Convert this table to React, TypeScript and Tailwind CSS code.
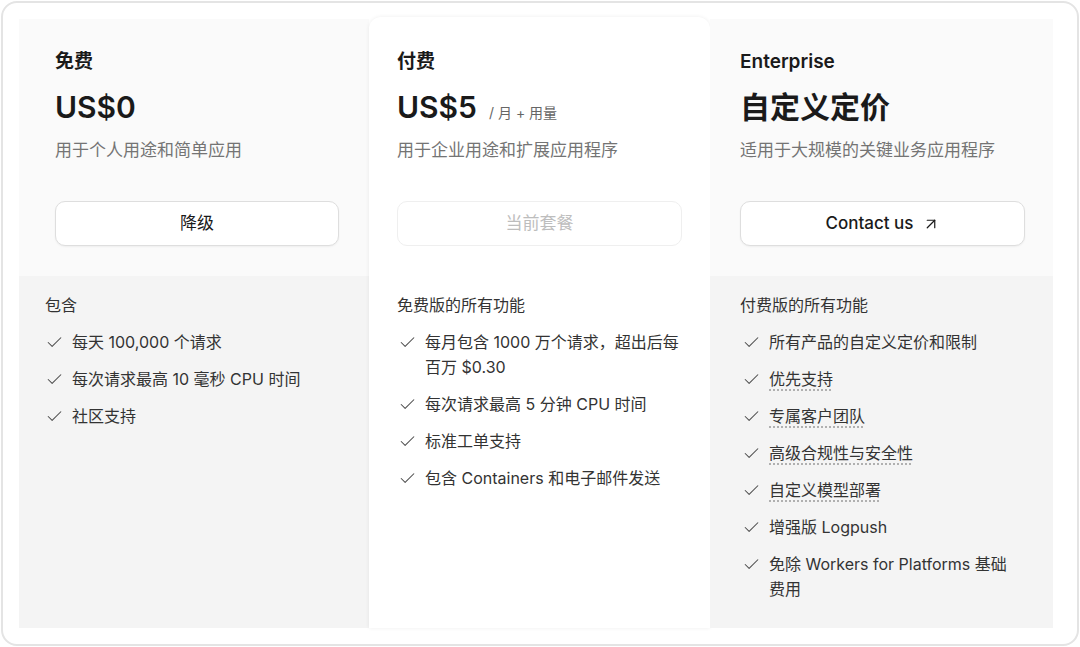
import { Check, ArrowUpRight } from 'lucide-react'

const font = { fontFamily: "Inter, 'Noto Sans CJK SC', 'Noto Sans', sans-serif" }

function Item({ children, dotted }: { children: React.ReactNode; dotted?: boolean }) {
  return (
    <li className="flex items-start gap-[8px] text-[16px] leading-[25px] text-[#333]">
      <Check className="mt-[3px] h-[19px] w-[19px] shrink-0 text-[#4a4a4a]" strokeWidth={1.3} />
      <span
        className={
          dotted
            ? 'underline decoration-dotted decoration-[#999] underline-offset-[5px]'
            : ''
        }
      >
        {children}
      </span>
    </li>
  )
}

export default function App() {
  return (
    <div className="w-[1080px] h-[647px] bg-white p-[1px]" style={font}>
      <div className="h-full rounded-2xl border-2 border-[#e4e4e4] p-4 pr-[23px]">
        <div className="flex h-full">
          {/* 免费 */}
          <div className="flex w-[350px] flex-col">
            <div className="h-[257px] bg-[#fafafa] pl-[36px] pr-[30px] pt-[30px]">
              <h2 className="text-[19px] leading-[26px] font-semibold text-[#1a1a1a]">免费</h2>
              <div className="mt-[14px] text-[30px] leading-[36px] font-semibold text-[#1a1a1a]">US$0</div>
              <p className="mt-[13px] text-[17px] leading-[24px] text-[#747474]">用于个人用途和简单应用</p>
              <button className="mt-[39px] h-[45px] w-full rounded-[10px] border border-[#dedede] bg-white text-[17px] text-[#1a1a1a] shadow-[0_1px_2px_rgba(0,0,0,0.05)]">
                降级
              </button>
            </div>
            <div className="flex-1 bg-[#f4f4f4] pl-[26px] pt-[18px]">
              <h3 className="text-[16px] leading-[22px] text-[#333]">包含</h3>
              <ul className="mt-[14px] flex flex-col gap-[12px]">
                <Item>每天 100,000 个请求</Item>
                <Item>每次请求最高 10 毫秒 CPU 时间</Item>
                <Item>社区支持</Item>
              </ul>
            </div>
          </div>

          {/* 付费 */}
          <div className="-mt-[2px] flex w-[341px] flex-col rounded-t-xl bg-white shadow-[0_0_4px_rgba(0,0,0,0.07)]">
            <div className="h-[259px] pl-[28px] pr-[28px] pt-[32px]">
              <h2 className="text-[19px] leading-[26px] font-semibold text-[#1a1a1a]">付费</h2>
              <div className="mt-[14px] flex items-baseline">
                <span className="text-[30px] leading-[36px] font-semibold text-[#1a1a1a]">US$5</span>
                <span className="ml-[12px] text-[14px] text-[#666]">/ 月 + 用量</span>
              </div>
              <p className="mt-[13px] text-[17px] leading-[24px] text-[#747474]">用于企业用途和扩展应用程序</p>
              <button className="mt-[39px] h-[45px] w-full rounded-[10px] border border-[#efefef] bg-white text-[17px] text-[#bdbdbd]">
                当前套餐
              </button>
            </div>
            <div className="flex-1 pl-[28px] pt-[18px]">
              <h3 className="text-[16px] leading-[22px] text-[#333]">免费版的所有功能</h3>
              <ul className="mt-[14px] flex flex-col gap-[12px] pl-[1px]">
                <Item>
                  每月包含 1000 万个请求，超出后每
                  <br />
                  百万 $0.30
                </Item>
                <Item>每次请求最高 5 分钟 CPU 时间</Item>
                <Item>标准工单支持</Item>
                <Item>包含 Containers 和电子邮件发送</Item>
              </ul>
            </div>
          </div>

          {/* Enterprise */}
          <div className="flex w-[343px] flex-col">
            <div className="h-[257px] bg-[#fafafa] pl-[30px] pr-[28px] pt-[30px]">
              <h2 className="text-[19px] leading-[26px] font-semibold text-[#1a1a1a]">Enterprise</h2>
              <div className="mt-[14px] text-[30px] leading-[36px] font-bold text-[#1a1a1a]">自定义定价</div>
              <p className="mt-[13px] text-[17px] leading-[24px] text-[#747474]">适用于大规模的关键业务应用程序</p>
              <button className="mt-[39px] flex h-[45px] w-full items-center justify-center gap-[8px] rounded-[10px] border border-[#dedede] bg-white text-[17px] font-medium text-[#1a1a1a] shadow-[0_1px_2px_rgba(0,0,0,0.05)]">
                Contact us
                <ArrowUpRight className="h-[18px] w-[18px]" strokeWidth={1.6} />
              </button>
            </div>
            <div className="flex-1 bg-[#f4f4f4] pl-[30px] pt-[18px]">
              <h3 className="text-[16px] leading-[22px] text-[#333]">付费版的所有功能</h3>
              <ul className="mt-[14px] flex flex-col gap-[12px] pl-[2px]">
                <Item>所有产品的自定义定价和限制</Item>
                <Item dotted>优先支持</Item>
                <Item dotted>专属客户团队</Item>
                <Item dotted>高级合规性与安全性</Item>
                <Item dotted>自定义模型部署</Item>
                <Item>增强版 Logpush</Item>
                <Item>
                  免除 Workers for Platforms 基础
                  <br />
                  费用
                </Item>
              </ul>
            </div>
          </div>
        </div>
      </div>
    </div>
  )
}
